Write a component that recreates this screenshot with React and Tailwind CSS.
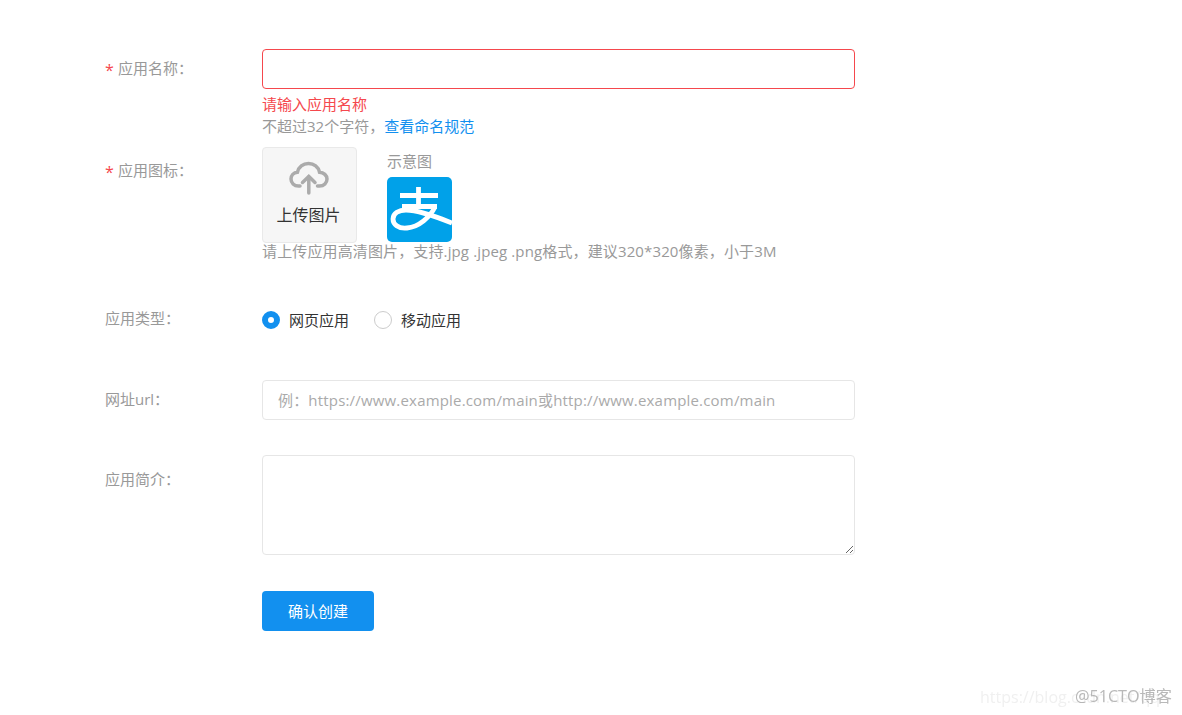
import React from "react";

const cjk = "font-['Open_Sans','Noto_Sans_CJK_SC',sans-serif]";

const Label = ({ required, children, className = "" }) => (
  <div className={`w-[157px] shrink-0 flex items-center h-[22px] text-[15px] text-[#999] ${className}`}>
    {required && <span className="w-[13px] mt-[4px] text-[#f5484d] text-[16px] leading-none">*</span>}
    <span>{children}</span>
  </div>
);

const AlipayLogo = () => (
  <svg width="65" height="65" viewBox="0 0 65 65" className="block">
    <rect width="65" height="65" rx="5" fill="#00a1e9" />
    <g fill="none" stroke="#fff" strokeWidth="4.800">
      <path d="M13 18.500H51" />
      <path d="M15 29.500H50" />
      <path d="M31.500 10V29" />
      <path d="M48 30C43 40 32 50 20 51C11 52 6 47 6 42C6 36 12 33 19 33C32 33 50 40 65 46" />
    </g>
  </svg>
);

const UploadCloud = () => (
  <svg width="40" height="34" viewBox="0 0 40 34" className="block">
    <g fill="none" stroke="#ababab" strokeWidth="3.500" strokeLinecap="round">
      <path d="M11 25H9.500C5 25 2 21.800 2 18C2 14.500 4.500 11.500 8.500 11.200C9.500 6 14 2.500 19.500 2.500C25 2.500 29.500 6 30.500 11.200C34.800 11.500 38 14.500 38 18C38 21.800 35 25 30.500 25H28.500" />
      <path d="M19.800 32V16" />
      <path d="M13.500 21.500L19.800 15.500L26 21.500" />
    </g>
  </svg>
);

const Radio = ({ checked, children }) => (
  <label className="flex items-center gap-[9px] text-[15px] text-[#333]">
    {checked ? (
      <span className="w-[18px] h-[18px] rounded-full border-[6px] border-[#1290ef] bg-white" />
    ) : (
      <span className="w-[18px] h-[18px] rounded-full border border-[#ccc] bg-white" />
    )}
    {children}
  </label>
);

export default function App() {
  return (
    <div className={`relative w-[1182px] h-[715px] overflow-hidden bg-white pl-[105px] pt-[49px] ${cjk}`}>
      <div className="flex">
        <Label required className="mt-[8px]">应用名称：</Label>
        <div className="w-[593px]">
          <input className="block w-full h-[40px] rounded-[4px] border border-[#f5484d] outline-none" />
          <p className="mt-[4px] h-[22px] leading-[22px] text-[15px] text-[#f5484d]">请输入应用名称</p>
          <p className="h-[22px] leading-[22px] text-[15px] text-[#999]">
            不超过32个字符，<span className="text-[#1290ef]">查看命名规范</span>
          </p>
        </div>
      </div>

      <div className="flex mt-[10px]">
        <Label required className="mt-[12px]">应用图标：</Label>
        <div>
          <div className="flex">
            <div className="w-[95px] h-[96px] rounded-[4px] border border-[#e9e9e9] bg-[#f6f6f6] flex flex-col items-center pt-[13px] pr-[2px]">
              <UploadCloud />
              <span className="mt-[9px] text-[16px] leading-[22px] text-[#333]">上传图片</span>
            </div>
            <div className="ml-[30px]">
              <p className="text-[15px] leading-[22px] mt-[3px] mb-[5px] text-[#999]">示意图</p>
              <AlipayLogo />
            </div>
          </div>
          <p className="text-[15px] leading-[22px] mt-[-3px] tracking-[0.13px] text-[#999]">
            请上传应用高清图片，支持.jpg .jpeg .png格式，建议320*320像素，小于3M
          </p>
        </div>
      </div>

      <div className="flex mt-[45px]">
        <Label>应用类型：</Label>
        <div className="flex items-center gap-[25px] mt-[2px] h-[22px]">
          <Radio checked>网页应用</Radio>
          <Radio>移动应用</Radio>
        </div>
      </div>

      <div className="flex mt-[49px]">
        <Label className="mt-[8px]">网址url：</Label>
        <input
          placeholder="例：https://www.example.com/main或http://www.example.com/main"
          className="w-[593px] h-[40px] px-[15px] rounded-[4px] border border-[#e6e6e6] text-[15px] tracking-[0.18px] outline-none placeholder:text-[#aaa]"
        />
      </div>

      <div className="flex mt-[35px]">
        <Label className="mt-[13px]">应用简介：</Label>
        <textarea className="block w-[593px] h-[100px] rounded-[4px] border border-[#e6e6e6] outline-none" />
      </div>

      <button className="block ml-[157px] mt-[36px] w-[112px] h-[40px] rounded-[4px] bg-[#1290ef] text-white text-[15px]">
        确认创建
      </button>

      <div className="absolute left-[980px] top-[687px] text-[16px] leading-[20px] text-[#f0f0f0] blur-[0.4px] whitespace-nowrap">
        https://blog.csdn.net/qq
      </div>
      <div className="absolute right-[10px] top-[686px] text-[16.200px] leading-[20px] text-[#a8a8a8] opacity-80 blur-[0.4px] whitespace-nowrap">
        @51CTO博客
      </div>
    </div>
  );
}
